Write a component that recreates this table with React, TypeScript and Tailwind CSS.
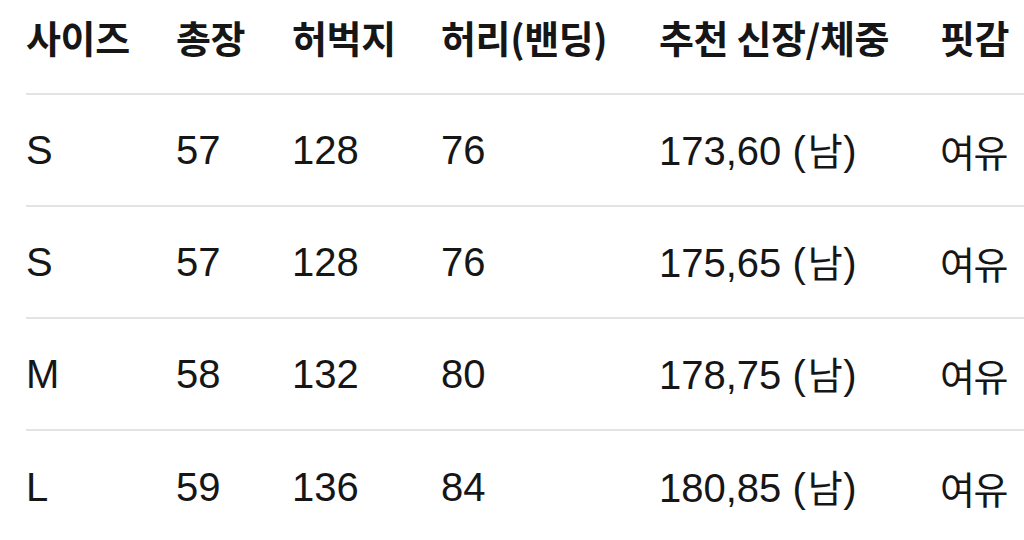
const headers = ["사이즈", "총장", "허벅지", "허리(밴딩)", "추천 신장/체중", "핏감"];

const rows = [
  ["S", "57", "128", "76", "173,60", "여유"],
  ["S", "57", "128", "76", "175,65", "여유"],
  ["M", "58", "132", "80", "178,75", "여유"],
  ["L", "59", "136", "84", "180,85", "여유"],
];

const cols = "grid grid-cols-[150px_116px_149px_218px_281px_1fr]";
const ko = "font-['Noto_Sans_CJK_KR',sans-serif] text-[38px] tracking-[-0.04em]";
const koHead = "font-['Noto_Sans_CJK_KR',sans-serif] text-[38px] tracking-[-0.01em]";

export default function App() {
  return (
    <div className="w-[1024px] h-[540px] overflow-hidden bg-white pl-[26px] text-[#161616] font-['Liberation_Sans','Noto_Sans_CJK_KR',sans-serif]">
      <div className={`${cols} h-[95px] pt-[7px] items-start border-b-2 border-[#e3e3e3] font-semibold ${koHead}`}>
        {headers.map((h) => (
          <div key={h} className="whitespace-nowrap leading-[60px]">{h}</div>
        ))}
      </div>
      {rows.map((r, i) => (
        <div key={i} className={`${cols} h-[112px] items-center text-[40px] ${i < rows.length - 1 ? "border-b-2 border-[#e3e3e3]" : ""}`}>
          <div>{r[0]}</div>
          <div>{r[1]}</div>
          <div>{r[2]}</div>
          <div>{r[3]}</div>
          <div className="whitespace-nowrap">
            {r[4]} (<span className={`${ko} mx-[2px]`}>남</span>)
          </div>
          <div className={`whitespace-nowrap ${ko}`}>{r[5]}</div>
        </div>
      ))}
    </div>
  );
}
